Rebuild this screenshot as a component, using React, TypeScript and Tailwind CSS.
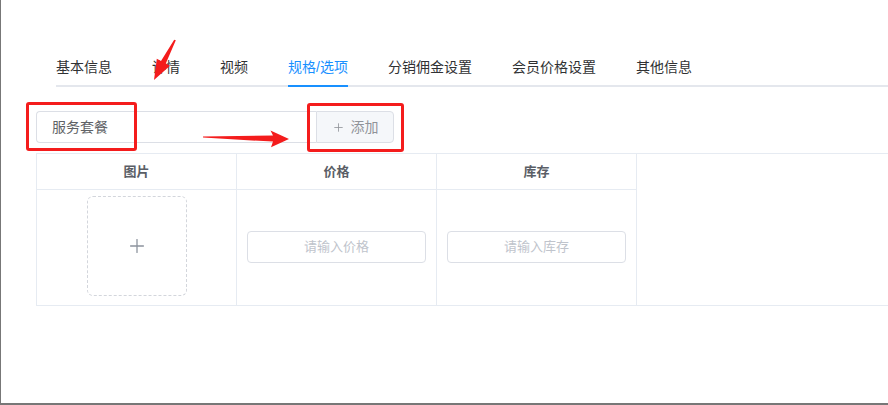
import { Plus } from 'lucide-react'

const tabs = ['基本信息', '详情', '视频', '规格/选项', '分销佣金设置', '会员价格设置', '其他信息']

export default function App() {
  const active = 3
  return (
    <div className="relative h-[405px] w-[888px] overflow-hidden border-b-2 border-l border-[#777] bg-white font-['Liberation_Sans','Noto_Sans_CJK_SC',sans-serif]">
      <div className="pl-[35px] pt-[48px]">
        {/* tabs */}
        <div className="ml-[20px] flex border-b-2 border-[#e4e7ed]">
          {tabs.map((t, i) => (
            <div key={t} className={`flex h-[37px] items-center pt-[1px] text-[14px] ${i === 0 ? 'pr-5' : 'px-5'} ${i === active ? 'text-[#1890ff]' : 'text-[#303133]'}`}>
              <span className="relative flex h-full items-center">
                {t}
                {i === active && <span className="absolute bottom-[-2px] left-0 right-0 h-[2px] bg-[#1890ff]" />}
              </span>
            </div>
          ))}
        </div>

        {/* spec name + add */}
        <div className="mt-[24px] flex h-[32px] w-[358px] text-[14px]">
          <div className="flex w-[280px] items-center rounded-l-[4px] border border-r-0 border-[#dcdfe6] pl-[15px] text-[#606266]">
            服务套餐
          </div>
          <div className="flex w-[78px] items-center justify-center gap-[6px] rounded-r-[4px] border border-[#dcdfe6] bg-[#f5f7fa] text-[#909399]">
            <Plus size={13} strokeWidth={1.5} />
            添加
          </div>
        </div>

        {/* table */}
        <div className="mt-[10px] w-[900px] border-y border-l border-[#e6ebf2]">
          <div className="grid w-[600px] grid-cols-3">
            {['图片', '价格', '库存'].map((h) => (
              <div key={h} className="flex h-[36px] items-center justify-center border-b border-r border-[#e6ebf2] text-[13px] font-bold text-[#5a5e66]">
                {h}
              </div>
            ))}
            <div className="flex h-[115px] items-center justify-center border-r border-[#e6ebf2] pb-[3px]">
              <div className="flex h-[100px] w-[100px] items-center justify-center rounded-[6px] border border-dashed border-[#d3d6dc]">
                <Plus size={22} strokeWidth={1.4} className="text-[#8c939d]" />
              </div>
            </div>
            {['请输入价格', '请输入库存'].map((p) => (
              <div key={p} className="flex h-[115px] items-center justify-center border-r border-[#e6ebf2] px-[10px] pb-[2px]">
                <div className="flex h-[32px] w-full items-center justify-center rounded-[4px] border border-[#dcdfe6] text-[13px] text-[#c0c4cc]">
                  {p}
                </div>
              </div>
            ))}
          </div>
        </div>
      </div>

      {/* annotations */}
      <div className="absolute left-[25px] top-[102px] h-[49px] w-[111px] rounded-[3px] border-[3px] border-[#f41c1c]" />
      <div className="absolute left-[306px] top-[103px] h-[49px] w-[97px] rounded-[3px] border-[3px] border-[#f41c1c]" />
      <svg className="pointer-events-none absolute left-0 top-0" width="888" height="405" viewBox="0 0 888 405">
        <polygon
          fill="#f41c1c"
          points="174.8,40.3 164.8,63.6 169,65.8 153,80 155.8,58.8 160,61 173.2,39.7"
        />
        <polygon
          fill="#f41c1c"
          points="202,136.6 272,135.6 269.5,130.5 288,139 270,147.3 272,141.6 202,137.6"
        />
      </svg>
    </div>
  )
}
